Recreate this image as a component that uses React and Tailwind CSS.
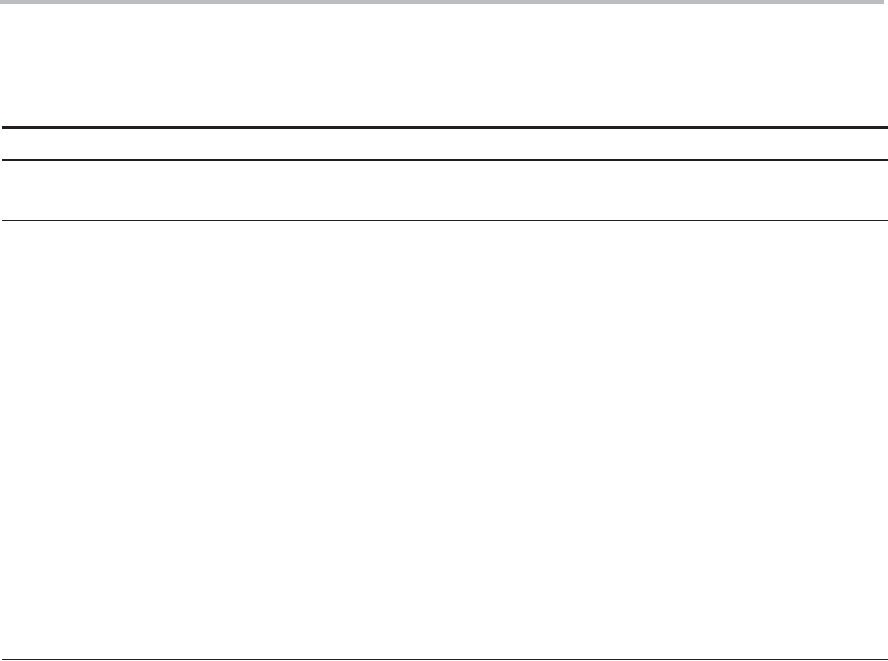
export default function App() {
    return (
        <div className="min-h-[661px] w-[888px] bg-white font-['Liberation_Sans',sans-serif]">
            <div className="h-[4px] w-[884px] bg-[#bcbdc0]" />

            <div className="mt-[122px] pl-[2px]">
                {/* table head */}
                <div className="h-[35px] border-t-[3px] border-b-2 border-[#231f20]" />

                {/* table body */}
                <div className="h-[60px] border-b border-[#231f20]" />

                <div className="h-[439px] border-b border-[#231f20]" />
            </div>
        </div>
    );
}
